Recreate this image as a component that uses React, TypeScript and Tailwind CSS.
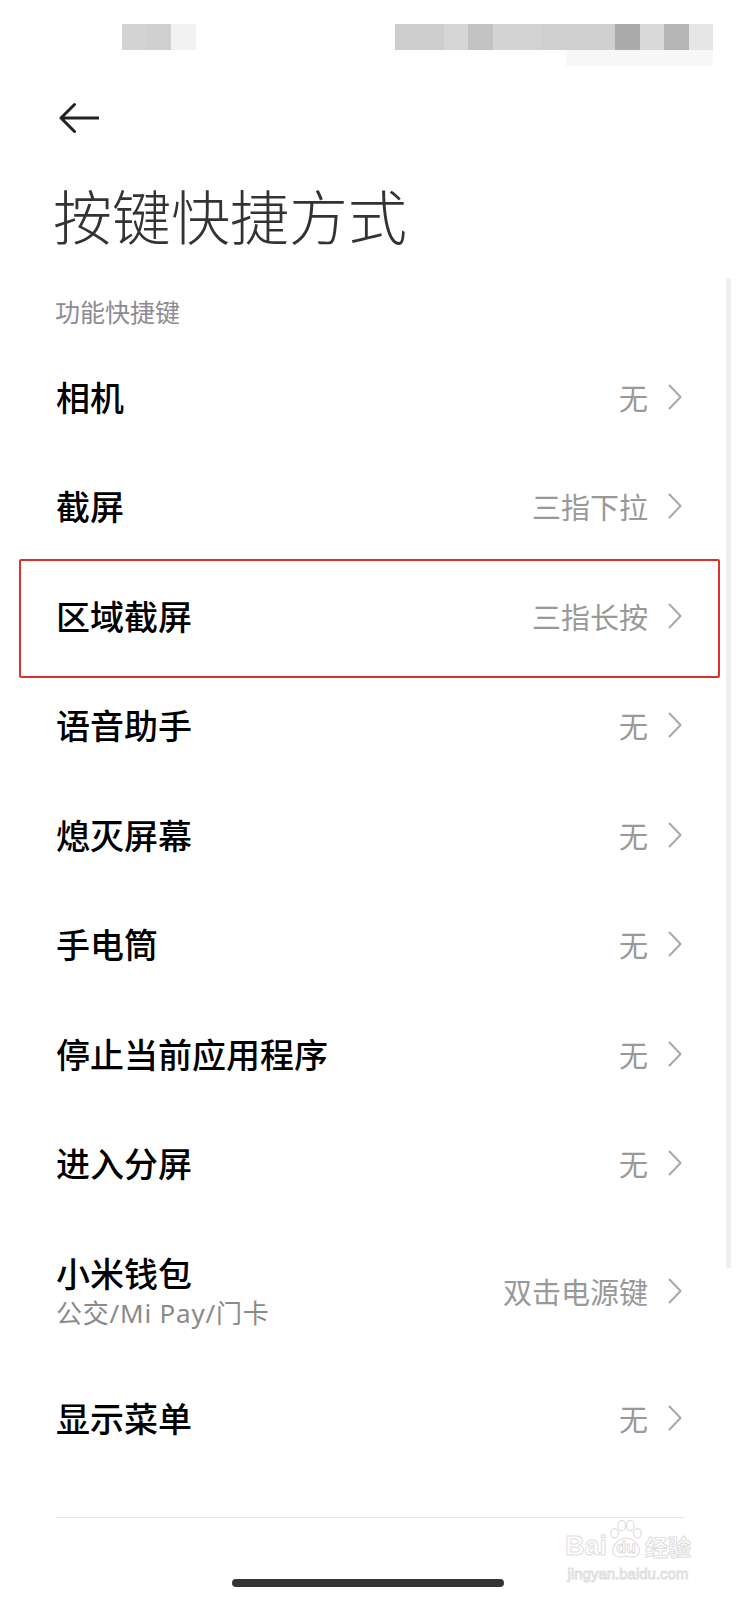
import React from 'react';

const font = { fontFamily: '"Noto Sans CJK SC", "Noto Sans", sans-serif' };

type Row = { label: string; value: string; sub?: string; marked?: boolean };

const rows: Row[] = [
  { label: '相机', value: '无' },
  { label: '截屏', value: '三指下拉' },
  { label: '区域截屏', value: '三指长按', marked: true },
  { label: '语音助手', value: '无' },
  { label: '熄灭屏幕', value: '无' },
  { label: '手电筒', value: '无' },
  { label: '停止当前应用程序', value: '无' },
  { label: '进入分屏', value: '无' },
  { label: '小米钱包', value: '双击电源键', sub: '公交/Mi Pay/门卡' },
  { label: '显示菜单', value: '无' },
];

const leftCells = ['#d3d3d3', '#d0d0d0', '#f2f2f2'];
const rightCells = [
  '#cecece', '#cecece', '#d6d6d6', '#c2c2c2', '#d3d3d3', '#d3d3d3', '#cfcfcf',
  '#cfcfcf', '#d0d0d0', '#ababab', '#d9d9d9', '#b6b6b6', '#e6e6e6',
];

const Chevron = () => (
  <svg width="14" height="26" viewBox="0 0 14 26" fill="none" className="shrink-0">
    <polyline points="1.5,1.5 12.5,13 1.5,24.5" stroke="#a9a9a9" strokeWidth="2" strokeLinecap="round" strokeLinejoin="round" />
  </svg>
);

const StatusBar = () => (
  <div className="h-[80px] pt-[24px] flex">
    {/* blurred clock */}
    <div className="ml-[122px] flex h-[26px]">
      {leftCells.map((c, i) => (
        <div key={i} className="w-[24.5px] h-full" style={{ backgroundColor: c }} />
      ))}
    </div>
    {/* blurred status icons */}
    <div className="ml-[199px] flex flex-col">
      <div className="flex h-[26px]">
        {rightCells.map((c, i) => (
          <div key={i} className="w-[24.5px] h-full" style={{ backgroundColor: c }} />
        ))}
      </div>
      <div className="flex h-[16px]">
        <div className="w-[171px]" />
        <div className="w-[147px] h-full bg-[#f7f7f7]" />
      </div>
    </div>
  </div>
);

// faint baidu jingyan watermark
const Watermark = () => (
  <div className="absolute left-[565px] top-[1518px] flex flex-col items-center whitespace-nowrap text-white [-webkit-text-stroke:1px_#dedede]">
    <div className="flex items-end h-[42px]">
      <span className="text-[27px] leading-[28px] font-bold" style={{ fontFamily: '"Liberation Sans", sans-serif' }}>
        Bai
      </span>
      <div className="relative w-[38px] h-[42px] shrink-0">
        <svg width="38" height="42" viewBox="0 0 40 42" fill="none" className="absolute inset-0">
          <g stroke="#dedede" strokeWidth="1.3" fill="white">
            <ellipse cx="8" cy="15" rx="4" ry="5" />
            <ellipse cx="15.5" cy="7" rx="4" ry="5.5" />
            <ellipse cx="24.5" cy="7" rx="4" ry="5.5" />
            <ellipse cx="32" cy="15" rx="4" ry="5" />
            <path d="M20 20C12 20 6 28 6 33C6 38 10 40 14 40C17 40 18 39 20 39C22 39 23 40 26 40C30 40 34 38 34 33C34 28 28 20 20 20Z" />
          </g>
        </svg>
        <span className="absolute left-0 right-0 top-[22px] text-center text-[16px] leading-[16px] font-bold" style={{ fontFamily: '"Liberation Sans", sans-serif' }}>
          du
        </span>
      </div>
      <span className="text-[23px] leading-[28px] font-bold">经验</span>
    </div>
    <span className="mt-[6px] text-[15px] leading-[16px]" style={{ fontFamily: '"Liberation Sans", sans-serif' }}>
      jingyan.baidu.com
    </span>
  </div>
);

export default function App() {
  return (
    <div className="relative w-[738px] h-[1600px] bg-white overflow-hidden" style={font}>
      <StatusBar />

      {/* back */}
      <div className="h-[76px] flex items-center pl-[59px]">
        <svg width="40" height="32" viewBox="0 0 40 32" fill="none">
          <path d="M2 16H39M2 16L15.5 2.5M2 16L15.5 29.5" stroke="#222" strokeWidth="3" strokeLinecap="round" strokeLinejoin="round" />
        </svg>
      </div>

      <h1 className="mt-[17px] pl-[53px] h-[84px] leading-[84px] text-[59px] font-light text-[#333]">
        按键快捷方式
      </h1>

      <div className="mt-[34px] pl-[55px] h-[40px] leading-[40px] text-[25px] text-[#8c8c92]">功能快捷键</div>

      <div className="mt-[11px]">
        {rows.map((r) => (
          <div
            key={r.label}
            className={`relative flex items-center justify-between pl-[56px] pr-[56px] ${r.sub ? 'h-[145.5px]' : 'h-[109.5px]'}`}
          >
            {r.marked && (
              <div className="absolute left-[19px] right-[18px] -top-[2px] -bottom-[7px] border-2 border-[#dd3129] rounded-[2px]" />
            )}
            <div className="flex flex-col">
              <span className="text-[34px] leading-[44px] font-medium text-black">{r.label}</span>
              {r.sub && (
                <span
                  className="text-[26px] leading-[36px] tracking-[0.8px] text-[#8a8a8a]"
                  style={{ fontFamily: '"Noto Sans", "Noto Sans CJK SC", sans-serif' }}
                >
                  {r.sub}
                </span>
              )}
            </div>
            <div className="flex items-center gap-[20px]">
              <span className="text-[29px] leading-[40px] text-[#999]">{r.value}</span>
              <Chevron />
            </div>
          </div>
        ))}
      </div>

      {/* divider */}
      <div className="absolute left-[56px] right-[54px] top-[1517px] h-px bg-[#e6e6e6]" />

      {/* scrollbar */}
      <div className="absolute left-[726px] top-[278px] w-[5px] h-[990px] bg-[#efefef] rounded-full" />

      <Watermark />

      {/* home indicator */}
      <div className="absolute left-[232px] top-[1579px] w-[272px] h-[8px] rounded-full bg-[#333]" />
    </div>
  );
}
